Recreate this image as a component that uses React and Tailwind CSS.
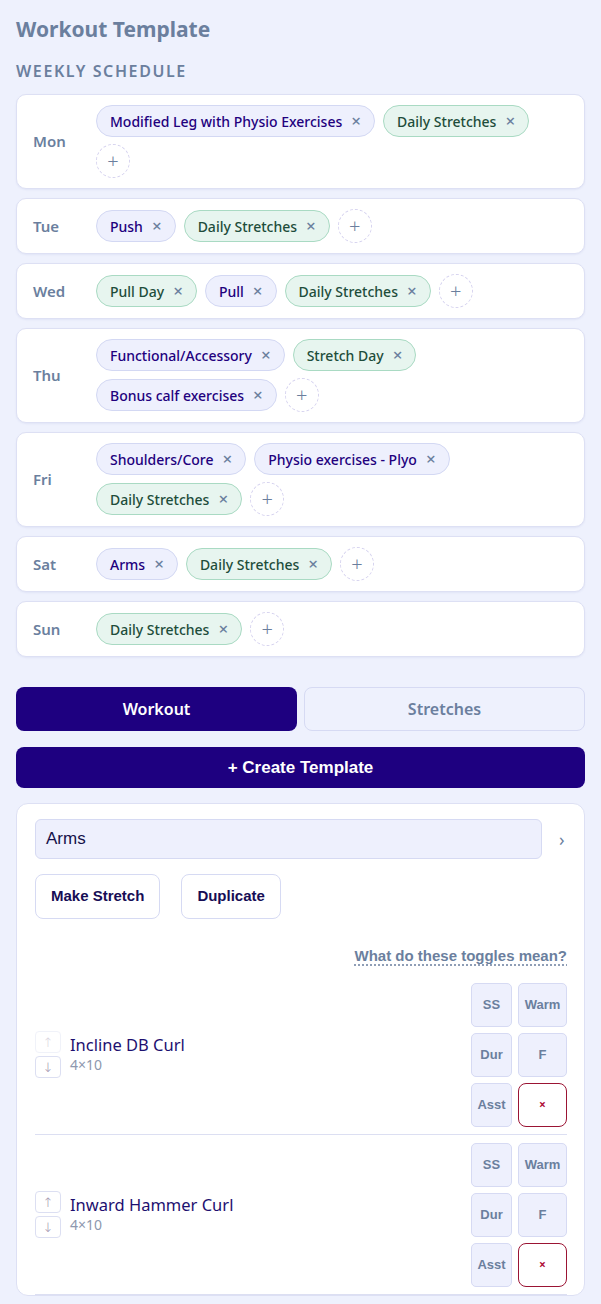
const schedule = [
  { day: 'Mon', items: [['Modified Leg with Physio Exercises', 'w'], ['Daily Stretches', 's']] },
  { day: 'Tue', items: [['Push', 'w'], ['Daily Stretches', 's']] },
  { day: 'Wed', items: [['Pull Day', 's'], ['Pull', 'w'], ['Daily Stretches', 's']] },
  { day: 'Thu', items: [['Functional/Accessory', 'w'], ['Stretch Day', 's'], ['Bonus calf exercises', 'w']] },
  { day: 'Fri', items: [['Shoulders/Core', 'w'], ['Physio exercises - Plyo', 'w'], ['Daily Stretches', 's']] },
  { day: 'Sat', items: [['Arms', 'w'], ['Daily Stretches', 's']] },
  { day: 'Sun', items: [['Daily Stretches', 's']] },
]

const exercises = [
  { name: 'Incline DB Curl', sets: '4×10', first: true },
  { name: 'Inward Hammer Curl', sets: '4×10' },
]

function Chip({ label, kind }) {
  const tone =
    kind === 's'
      ? 'bg-[#e7f5ef] border-[#a9dac3] text-[#1e4d3b]'
      : 'bg-[#eef0fd] border-[#d3d8f3] text-[#22007e]'
  return (
    <span className={`h-[32px] inline-flex items-center gap-[9px] rounded-full border pl-[13px] pr-[13px] text-[14px] font-medium ${tone}`}>
      {label}
      <span className="text-[#6b7f9e] text-[17px] leading-none -mt-[2px]">×</span>
    </span>
  )
}

function DayRow({ day, items }) {
  return (
    <div className="flex items-center rounded-[10px] border border-[#dde0f4] bg-white px-4 py-[10px] shadow-[0_1px_2px_rgba(80,90,160,0.08)]">
      <div className="w-[51px] mr-3 shrink-0 text-[15px] font-semibold text-[#6b7f9e]">{day}</div>
      <div className="flex flex-wrap items-center gap-x-2 gap-y-[7px]">
        {items.map(([label, kind], i) => (
          <Chip key={i} label={label} kind={kind} />
        ))}
        <button className="w-[34px] h-[34px] rounded-full border border-dashed border-[#d6d3ef] text-[#6b7f9e] text-[20px] font-light leading-none flex items-center justify-center">
          +
        </button>
      </div>
    </div>
  )
}

function Toggle({ label, wide }) {
  return (
    <div className={`${wide ? 'w-[49px]' : 'w-[41px]'} h-[44px] rounded-[5px] border border-[#d6daf3] bg-[#eef0fd] flex items-center justify-center text-[13px] font-bold text-[#6b7f9e] font-['Liberation_Sans',Arial,sans-serif]`}>
      {label}
    </div>
  )
}

function ExerciseRow({ name, sets, first }) {
  return (
    <div className="flex items-center justify-between border-b border-[#dcdff2] pt-[8px] pb-[7px]">
      <div className="flex items-center gap-[9px]">
        <div className="flex flex-col gap-[3px] font-['DejaVu_Sans',sans-serif]">
          <button className={`w-[26px] h-[22px] rounded-[4px] border border-[#dcdff2] text-[13px] font-light leading-none flex items-center justify-center text-[#a093ad] ${first ? 'opacity-40' : ''}`}>
            ↑
          </button>
          <button className="w-[26px] h-[22px] rounded-[4px] border border-[#dcdff2] text-[13px] font-light leading-none flex items-center justify-center text-[#a093ad]">
            ↓
          </button>
        </div>
        <div className="flex flex-col -mt-[2px]">
          <span className="text-[16.5px] text-[#1d1070] leading-[22px]">{name}</span>
          <span className="text-[14px] text-[#8d98ae] leading-[18px]">{sets}</span>
        </div>
      </div>
      <div className="grid grid-cols-[41px_49px] gap-[6px]">
        <Toggle label="SS" />
        <Toggle label="Warm" wide />
        <Toggle label="Dur" />
        <Toggle label="F" wide />
        <Toggle label="Asst" />
        <div className="w-[49px] h-[44px] rounded-[8px] border border-[#9b1434] bg-white flex items-center justify-center text-[12px] font-bold text-[#b0103a]">
          ×
        </div>
      </div>
    </div>
  )
}

export default function App() {
  return (
    <div className="min-h-screen bg-[#eef1fd] px-4 pt-[14px] font-['Noto_Sans','Open_Sans',sans-serif]">
      <h1 className="text-[21px] font-bold text-[#6b7f9e] leading-[30px]">Workout Template</h1>
      <h2 className="mt-[16px] text-[16px] font-semibold uppercase tracking-[0.1em] text-[#6b7f9e] leading-[22px]">
        Weekly Schedule
      </h2>
      <div className="mt-[12px] flex flex-col gap-[9px]">
        {schedule.map((d) => (
          <DayRow key={d.day} {...d} />
        ))}
      </div>

      <div className="mt-[30px] grid grid-cols-2 gap-[7px]">
        <button className="h-[44px] rounded-[8px] bg-[#1e0080] text-white text-[16px] font-semibold">Workout</button>
        <button className="h-[44px] rounded-[8px] border border-[#d6daf3] bg-[#eef1fd] text-[#6b7f9e] text-[16px] font-semibold">
          Stretches
        </button>
      </div>
      <button className="mt-[16px] w-full h-[41px] rounded-[8px] bg-[#1e0080] text-white text-[17px] font-bold font-['Liberation_Sans',Arial,sans-serif]">
        + Create Template
      </button>

      <div className="mt-[15px] rounded-[12px] border border-[#dde0f4] bg-white pl-[18px] pr-[17px] pt-[15px]">
        <div className="flex items-center gap-[17px]">
          <div className="flex-1 h-[40px] rounded-[6px] border border-[#d6daf3] bg-[#eef0fd] px-[10px] flex items-center text-[17px] font-medium text-[#16104a] font-['Liberation_Sans',Arial,sans-serif]">
            Arms
          </div>
          <span className="w-[8px] text-[18px] text-[#6b7f9e] leading-none">›</span>
        </div>
        <div className="mt-[15px] flex gap-[21px] font-['Liberation_Sans',Arial,sans-serif]">
          <button className="h-[45px] px-[15px] rounded-[8px] border border-[#d6daf3] bg-white text-[15px] font-bold text-[#170d55]">
            Make Stretch
          </button>
          <button className="h-[45px] px-[15px] rounded-[8px] border border-[#d6daf3] bg-white text-[15px] font-bold text-[#170d55]">
            Duplicate
          </button>
        </div>
        <div className="mt-[26px] flex justify-end">
          <span className="text-[15px] font-bold text-[#6b7f9e] underline decoration-dotted decoration-[#6b7f9e] underline-offset-[4px] font-['Liberation_Sans',Arial,sans-serif]">
            What do these toggles mean?
          </span>
        </div>
        <div className="mt-[7px] flex flex-col">
          {exercises.map((e) => (
            <ExerciseRow key={e.name} {...e} />
          ))}
        </div>
      </div>
    </div>
  )
}
